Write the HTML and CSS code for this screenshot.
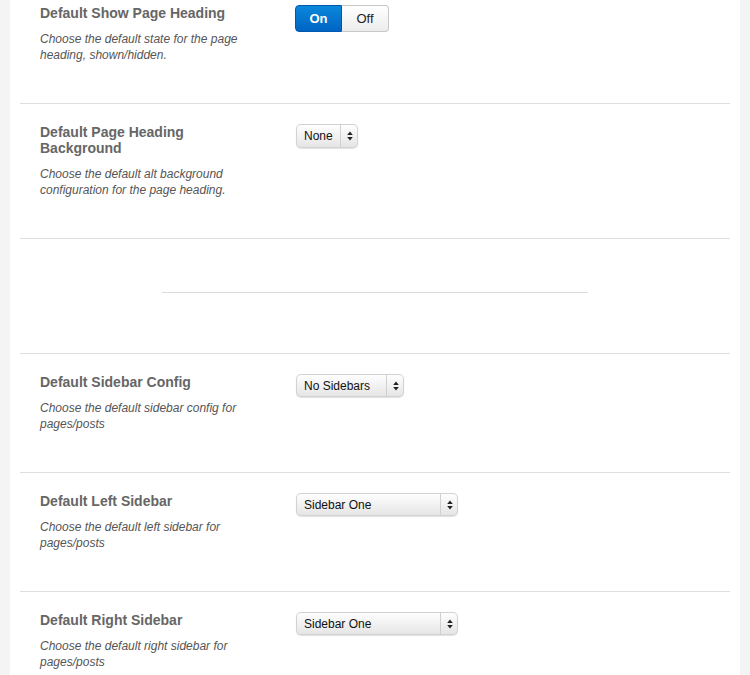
FILE: index.html
```html
<!DOCTYPE html>
<html>
<head>
<meta charset="utf-8">
<link rel="stylesheet" href="styles.css">
</head>
<body>
<div class="panel">
  <div class="row row-first">
    <div class="info">
      <h3 class="title">Default Show Page Heading</h3>
      <p class="desc">Choose the default state for the page heading, shown/hidden.</p>
    </div>
    <div class="control">
      <div class="switch">
        <span class="sw sw-on">On</span>
        <span class="sw sw-off">Off</span>
      </div>
    </div>
  </div>
  <div class="row">
    <div class="info">
      <h3 class="title">Default Page Heading Background</h3>
      <p class="desc">Choose the default alt background configuration for the page heading.</p>
    </div>
    <div class="control">
      <div class="select sel-none">
        <span class="sel-text">None</span>
        <span class="sel-arrow"><svg width="6" height="10" viewBox="0 0 6 10"><path d="M3 0.5L5.8 4H0.2Z M3 9.5L5.8 6H0.2Z" fill="#222"/></svg></span>
      </div>
    </div>
  </div>
  <div class="divider-row">
    <div class="hr"></div>
  </div>
  <div class="row">
    <div class="info">
      <h3 class="title">Default Sidebar Config</h3>
      <p class="desc">Choose the default sidebar config for pages/posts</p>
    </div>
    <div class="control">
      <div class="select sel-config">
        <span class="sel-text">No Sidebars</span>
        <span class="sel-arrow"><svg width="6" height="10" viewBox="0 0 6 10"><path d="M3 0.5L5.8 4H0.2Z M3 9.5L5.8 6H0.2Z" fill="#222"/></svg></span>
      </div>
    </div>
  </div>
  <div class="row">
    <div class="info">
      <h3 class="title">Default Left Sidebar</h3>
      <p class="desc">Choose the default left sidebar for pages/posts</p>
    </div>
    <div class="control">
      <div class="select sel-wide">
        <span class="sel-text">Sidebar One</span>
        <span class="sel-arrow"><svg width="6" height="10" viewBox="0 0 6 10"><path d="M3 0.5L5.8 4H0.2Z M3 9.5L5.8 6H0.2Z" fill="#222"/></svg></span>
      </div>
    </div>
  </div>
  <div class="row">
    <div class="info">
      <h3 class="title">Default Right Sidebar</h3>
      <p class="desc">Choose the default right sidebar for pages/posts</p>
    </div>
    <div class="control">
      <div class="select sel-wide">
        <span class="sel-text">Sidebar One</span>
        <span class="sel-arrow"><svg width="6" height="10" viewBox="0 0 6 10"><path d="M3 0.5L5.8 4H0.2Z M3 9.5L5.8 6H0.2Z" fill="#222"/></svg></span>
      </div>
    </div>
  </div>
</div>
</body>
</html>
```
FILE: styles.css
```css
html, body {
  margin: 0;
  padding: 0;
  background: #f4f4f4;
  font-family: "Liberation Sans", Arial, Helvetica, sans-serif;
  height: 100%;
  overflow: hidden;
}
.panel {
  margin: 0 10px;
  background: #fff;
  padding: 0 10px;
  min-height: 100%;
}
.row {
  display: flex;
  padding: 20px 0 40px 20px;
  border-bottom: 1px solid #dedede;
}
.row-first {
  padding-top: 5px;
}
.info {
  width: 256px;
}
.title {
  margin: 0 0 10px 0;
  font-size: 14px;
  line-height: 16px;
  font-weight: bold;
  color: #666;
  width: 200px;
}
.desc {
  margin: 0;
  font-size: 12px;
  line-height: 16px;
  font-style: italic;
  color: #555;
  width: 220px;
}
.control {
  flex: 1;
}
.switch {
  display: inline-flex;
  height: 27px;
  margin-left: -1px;
}
.sw {
  box-sizing: border-box;
  width: 47px;
  display: flex;
  align-items: center;
  justify-content: center;
  font-size: 13px;
}
.sw-on {
  background: linear-gradient(#0a88da, #0064c4);
  color: #fff;
  font-weight: bold;
  border: 1px solid #0058ad;
  border-radius: 4px 0 0 4px;
}
.sw-off {
  background: linear-gradient(#fff, #ececec);
  color: #222;
  border: 1px solid #c8c8c8;
  border-left: none;
  border-radius: 0 4px 4px 0;
}
.select {
  display: inline-flex;
  height: 23px;
  border-radius: 5px;
  background: linear-gradient(#ffffff 0%, #f3f3f3 45%, #e4e4e4 100%);
  box-shadow: 0 0 0 1px #d2d2d2 inset, 0 1px 1px rgba(0,0,0,0.12);
  font-size: 12px;
  color: #111;
  align-items: stretch;
}
.sel-text {
  flex: 1;
  display: flex;
  align-items: center;
  padding-left: 8px;
}
.sel-arrow {
  width: 17px;
  display: flex;
  align-items: center;
  justify-content: center;
  border-left: 1px solid #d0d0d0;
}
.sel-none { width: 62px; height: 24px; }
.sel-config { width: 108px; }
.sel-wide { width: 162px; }
.divider-row {
  height: 115px;
  border-bottom: 1px solid #dedede;
  display: flex;
  justify-content: center;
  padding-top: 53px;
  box-sizing: border-box;
}
.hr {
  width: 60%;
  height: 1px;
  background: #dcdcdc;
}
```
